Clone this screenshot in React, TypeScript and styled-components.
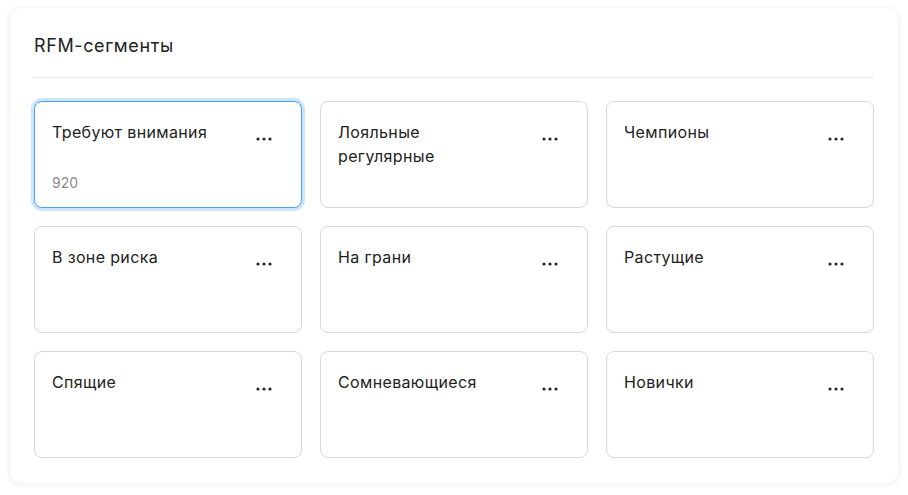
import styled, { createGlobalStyle } from 'styled-components';

const GlobalStyle = createGlobalStyle`
  body {
    margin: 0;
    background: #ffffff;
    font-family: Inter, "Noto Sans", sans-serif;
    color: #222;
  }
`;

const Page = styled.div`
  padding: 8px 10px 11px;
`;

const Panel = styled.section`
  background: #fff;
  border-radius: 10px;
  box-shadow: 0 1px 6px rgba(0, 0, 0, 0.09), 0 0 1px rgba(0, 0, 0, 0.06);
  padding: 0 24px 25px;
`;

const Header = styled.header`
  padding: 26px 0 19px;
  border-bottom: 1px solid #e8e8e8;
`;

const Title = styled.h2`
  margin: 0;
  font-size: 18px;
  line-height: 24px;
  font-weight: 400;
  letter-spacing: 0.6px;
  color: #222;
`;

const Grid = styled.div`
  display: grid;
  grid-template-columns: repeat(3, 1fr);
  grid-auto-rows: 107px;
  gap: 18px;
  margin-top: 23px;
`;

const Card = styled.div<{ $active?: boolean }>`
  display: flex;
  flex-direction: column;
  justify-content: space-between;
  padding: 18px 25px 15px 17px;
  border: 1px solid ${(p) => (p.$active ? '#4aa3f8' : '#d9d9d9')};
  border-radius: 8px;
  box-shadow: ${(p) => (p.$active ? '0 0 0 3px #cce4fd' : 'none')};
  background: #fff;
`;

const CardTop = styled.div`
  display: flex;
  justify-content: space-between;
  align-items: flex-start;
`;

const Name = styled.div`
  font-size: 16px;
  line-height: 24px;
  letter-spacing: 0.35px;
  color: #222;
  max-width: 164px;
`;

const MoreButton = styled.button`
  display: flex;
  align-items: center;
  justify-content: center;
  width: 24px;
  height: 24px;
  margin-top: 7px;
  padding: 0;
  border: none;
  background: transparent;
  cursor: pointer;
`;

const Count = styled.div`
  font-size: 14px;
  line-height: 18px;
  color: #8a8a8a;
`;

const Dots = () => (
  <svg width="16" height="4" viewBox="0 0 16 4">
    <circle cx="2" cy="2" r="1.6" fill="#262626" />
    <circle cx="8" cy="2" r="1.6" fill="#262626" />
    <circle cx="14" cy="2" r="1.6" fill="#262626" />
  </svg>
);

const segments: { name: string; count?: number }[] = [
  { name: 'Требуют внимания', count: 920 },
  { name: 'Лояльные регулярные' },
  { name: 'Чемпионы' },
  { name: 'В зоне риска' },
  { name: 'На грани' },
  { name: 'Растущие' },
  { name: 'Спящие' },
  { name: 'Сомневающиеся' },
  { name: 'Новички' },
];

export default function App() {
  return (
    <>
      <GlobalStyle />
      <Page>
        <Panel>
          <Header>
            <Title>RFM-сегменты</Title>
          </Header>
          <Grid>
            {segments.map((s, i) => (
              <Card key={s.name} $active={i === 0}>
                <CardTop>
                  <Name>{s.name}</Name>
                  <MoreButton aria-label="Ещё">
                    <Dots />
                  </MoreButton>
                </CardTop>
                {s.count !== undefined && <Count>{s.count}</Count>}
              </Card>
            ))}
          </Grid>
        </Panel>
      </Page>
    </>
  );
}
